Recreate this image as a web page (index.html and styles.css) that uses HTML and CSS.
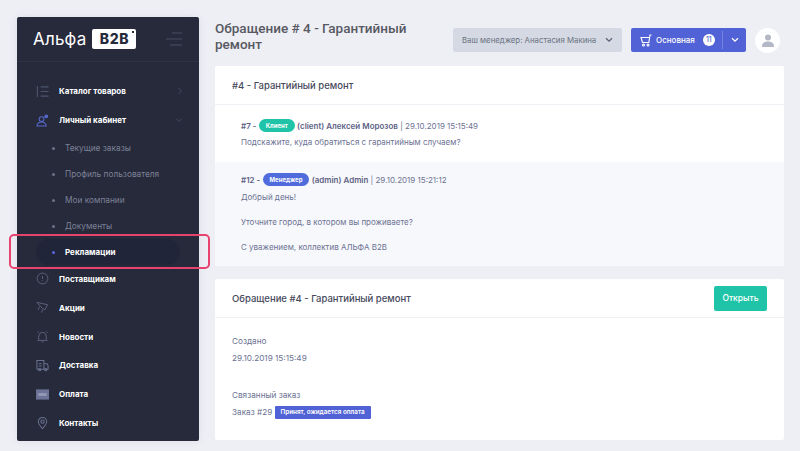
FILE: index.html
```html
<!DOCTYPE html>
<html lang="ru">
<head>
    <meta charset="UTF-8">
    <meta name="viewport" content="width=device-width, initial-scale=1.0">
    <title>Обращение # 4 - Гарантийный ремонт</title>
    <link rel="stylesheet" href="styles.css">
</head>
<body>
    <div class="page">
        <aside class="sidebar">
            <div class="brand">
                <span class="brand-name">Альфа</span>
                <span class="brand-box">B2B</span>
                <svg class="brand-toggle" width="18" height="14" viewBox="0 0 18 14" fill="none" stroke="#3d4356" stroke-width="1.4">
                    <path d="M7 1h10M1 7h16M5 13h12"/>
                </svg>
            </div>
            <nav class="menu">
                <a class="menu-item" href="#">
                    <svg class="menu-icon" viewBox="0 0 14 14" fill="none" stroke="#4d5470" stroke-width="1.2"><path d="M1.500 1v12M5 2h8.500M5 7h8.500M5 12h8.500"/></svg>
                    <span>Каталог товаров</span>
                    <svg class="menu-arrow" width="6" height="8" viewBox="0 0 6 8" fill="none" stroke="#434a60" stroke-width="1"><path d="M1.500 1l3 3-3 3"/></svg>
                </a>
                <a class="menu-item" href="#">
                    <svg class="menu-icon" viewBox="0 0 14 14" fill="none" stroke="#5869cf" stroke-width="1.100"><circle cx="6" cy="5.500" r="2.600"/><path d="M1 13c.3-3 2.300-4.500 5-4.500s4.700 1.500 5 4.500z"/><circle cx="11" cy="2.500" r="1.500" fill="#5869cf"/></svg>
                    <span>Личный кабинет</span>
                    <svg class="menu-arrow" width="8" height="6" viewBox="0 0 8 6" fill="none" stroke="#434a60" stroke-width="1"><path d="M1 1.500l3 3 3-3"/></svg>
                </a>
                <a class="submenu-item" href="#">Текущие заказы</a>
                <a class="submenu-item" href="#">Профиль пользователя</a>
                <a class="submenu-item" href="#">Мои компании</a>
                <a class="submenu-item" href="#">Документы</a>
                <a class="submenu-item active" href="#">Рекламации</a>
                <a class="menu-item" href="#">
                    <svg class="menu-icon" viewBox="0 0 14 14" fill="none" stroke="#5f6580" stroke-width="1"><circle cx="7" cy="7" r="5.800"/><path d="M7 4.500v3M7 9v.8"/></svg>
                    <span>Поставщикам</span>
                </a>
                <a class="menu-item" href="#">
                    <svg class="menu-icon" viewBox="0 0 14 14" fill="none" stroke="#5f6580" stroke-width="1"><path d="M1 1.500l11.500 2.500-3 5.500-2.500-1.500-2-2zM4 6L2.500 9M7 9l-1 3.500M3 8.500l-1 1"/></svg>
                    <span>Акции</span>
                </a>
                <a class="menu-item" href="#">
                    <svg class="menu-icon" viewBox="0 0 14 14" fill="none" stroke="#5f6580" stroke-width="1"><path d="M3 10V6.500a4 4 0 0 1 8 0V10l1.200 1.200H1.800zM6 12.800h2M1.500 3L3 1.500M12.500 3L11 1.500"/></svg>
                    <span>Новости</span>
                </a>
                <a class="menu-item" href="#">
                    <svg class="menu-icon" viewBox="0 0 14 14" fill="none" stroke="#6a7190" stroke-width="1.100"><path d="M1 1.500h7.500v9.500H1zM8.500 5H12l1 2v4H8.500M3 5h3M3 7.500h3"/><circle cx="4" cy="11.500" r="1.200"/><circle cx="10.500" cy="11.500" r="1.200"/></svg>
                    <span>Доставка</span>
                </a>
                <a class="menu-item" href="#">
                    <svg class="menu-icon" viewBox="0 0 14 14"><rect y="1.500" width="14" height="11" fill="#6d7396"/><rect x="2.500" y="5.500" width="9" height="3" fill="#9499b8"/></svg>
                    <span>Оплата</span>
                </a>
                <a class="menu-item" href="#">
                    <svg class="menu-icon" viewBox="0 0 14 14" fill="none" stroke="#6a7190" stroke-width="1.100"><path d="M7 13.500C4 10.500 2.500 8.500 2.500 6a4.500 4.500 0 0 1 9 0c0 2.500-1.500 4.500-4.500 7.500z"/><circle cx="7" cy="6" r="1.800"/></svg>
                    <span>Контакты</span>
                </a>
            </nav>
        </aside>

        <main class="content">
            <header class="topbar">
                <h1>Обращение # 4 - Гарантийный ремонт</h1>
                <div class="manager">
                    <span>Ваш менеджер: Анастасия Макина</span>
                    <svg width="8" height="6" viewBox="0 0 8 6" fill="none" stroke="#5d6478" stroke-width="1.300"><path d="M1 1.200l3 3 3-3"/></svg>
                </div>
                <div class="cart">
                    <div class="cart-main">
                        <svg width="12" height="13" viewBox="0 0 12 13" fill="none" stroke="#fff" stroke-width="1.100"><path d="M11.500 1h-1.500l-1.200 7.500H2.500L1 3.500h8.500"/><circle cx="3.500" cy="11" r="1"/><circle cx="8" cy="11" r="1"/></svg>
                        <span>Основная</span>
                        <span class="cart-count">11</span>
                    </div>
                    <div class="cart-arrow">
                        <svg width="8" height="6" viewBox="0 0 8 6" fill="none" stroke="#fff" stroke-width="1.300"><path d="M1 1.200l3 3 3-3"/></svg>
                    </div>
                </div>
                <div class="avatar">
                    <svg width="12" height="13" viewBox="0 0 12 13" fill="#b3b7c6"><circle cx="6" cy="3.500" r="3"/><path d="M0 12c0-3 2.500-4.500 6-4.500s6 1.500 6 4.500c0 .7-.5 1-1 1H1c-.5 0-1-.3-1-1z"/></svg>
                </div>
            </header>

            <section class="card">
                <div class="card-head">
                    <h2>#4 - Гарантийный ремонт</h2>
                </div>
                <div class="message">
                    <p class="message-meta"><b>#7 -</b> <span class="role role-client">Клиент</span> <b>(client) Алексей Морозов</b> | 29.10.2019 15:15:49</p>
                    <p>Подскажите, куда обратиться с гарантийным случаем?</p>
                </div>
                <div class="message message-alt">
                    <p class="message-meta"><b>#12 -</b> <span class="role role-manager">Менеджер</span> <b>(admin) Admin</b> | 29.10.2019 15:21:12</p>
                    <p>Добрый день!</p>
                    <p class="message-gap">Уточните город, в котором вы проживаете?</p>
                    <p class="message-gap">С уважением, коллектив АЛЬФА B2B</p>
                </div>
            </section>

            <section class="card">
                <div class="card-head card-head-action">
                    <h2>Обращение #4 - Гарантийный ремонт</h2>
                    <button class="btn-open" type="button">Открыть</button>
                </div>
                <div class="details">
                    <p>Создано</p>
                    <p class="details-value">29.10.2019 15:15:49</p>
                    <p class="details-label">Связанный заказ</p>
                    <p class="details-value">Заказ #29 <span class="status">Принят, ожидается оплата</span></p>
                </div>
            </section>
        </main>
    </div>

    <div class="highlight"></div>
</body>
</html>
```

FILE: styles.css
```css
html, body {
    height: 100%;
}

body {
    font-family: 'Inter', 'Liberation Sans', sans-serif;
    background-color: #eeeef5;
    color: #6c7293;
    margin: 0;
    padding: 0;
    overflow: hidden;
    position: relative;
}

p, h1, h2 {
    margin: 0;
}

a {
    text-decoration: none;
}

.page {
    display: flex;
    gap: 16px;
    padding: 14px 16px 0 17px;
}

.sidebar {
    width: 182px;
    height: 424px;
    margin-top: 3px;
    flex-shrink: 0;
    background-color: #262a3b;
    border-radius: 2px;
    overflow: hidden;
    box-shadow: 0 0 8px rgba(60, 60, 90, 0.08);
}

.brand {
    height: 45px;
    display: flex;
    align-items: center;
    padding: 0 16px;
    border-bottom: 1px solid #2e3345;
    box-sizing: border-box;
}

.brand-name {
    font-size: 17px;
    color: #ffffff;
    letter-spacing: 0.2px;
}

.brand-box {
    margin-left: 6px;
    width: 44px;
    height: 20px;
    background-color: #ffffff;
    border-radius: 2px;
    color: #262a3b;
    font-size: 14px;
    font-weight: 800;
    text-align: center;
    line-height: 20px;
    letter-spacing: 0.6px;
    position: relative;
}

.brand-box::after {
    content: "";
    position: absolute;
    right: 2px;
    top: 2px;
    width: 2px;
    height: 2px;
    background-color: #262a3b;
}

.brand-toggle {
    margin-left: auto;
}

.menu {
    padding-top: 15px;
}

.menu-item {
    height: 28.800px;
    display: flex;
    align-items: center;
    padding: 0 16px 0 19px;
    color: #ffffff;
    font-size: 8px;
    font-weight: 700;
}

.menu-icon {
    width: 13px;
    height: 13px;
    margin-right: 10px;
    flex-shrink: 0;
}

.menu-arrow {
    margin-left: auto;
}

.submenu-item {
    height: 26px;
    display: flex;
    align-items: center;
    margin-right: 19px;
    padding-left: 48px;
    position: relative;
    color: #7d8196;
    font-size: 8.300px;
}

.submenu-item::before {
    content: "";
    position: absolute;
    left: 35px;
    top: 12px;
    width: 3px;
    height: 3px;
    border-radius: 50%;
    background-color: #6c7084;
}

.submenu-item.active {
    color: #ffffff;
    font-weight: 700;
    font-size: 8px;
    background-color: #21253a;
    border-radius: 13px;
    margin-left: 19px;
    padding-left: 29px;
}

.submenu-item.active::before {
    left: 16px;
    background-color: #5867dd;
}

.content {
    flex: 1;
    min-width: 0;
}

.topbar {
    height: 52px;
    display: flex;
    align-items: center;
}

.topbar h1 {
    width: 200px;
    margin-right: auto;
    margin-top: -9px;
    font-family: 'Roboto', 'Liberation Sans', sans-serif;
    font-size: 13.500px;
    font-weight: 500;
    line-height: 16px;
    color: #575962;
}

.manager {
    width: 169px;
    height: 24px;
    box-sizing: border-box;
    display: flex;
    align-items: center;
    justify-content: space-between;
    padding: 0 9px;
    background-color: #d4d9e4;
    border-radius: 2px;
    color: #6b7280;
    font-size: 7.800px;
    white-space: nowrap;
}

.cart {
    width: 115px;
    height: 24px;
    margin-left: 9px;
    display: flex;
    background-color: #5062d6;
    border-radius: 2px;
    color: #ffffff;
    font-size: 8px;
    font-weight: 500;
}

.cart-main {
    flex: 1;
    display: flex;
    align-items: center;
    gap: 4px;
    padding-left: 9px;
}

.cart-count {
    width: 12px;
    height: 12px;
    margin-left: 4px;
    border-radius: 50%;
    background-color: #ffffff;
    color: #5062d6;
    font-size: 7px;
    line-height: 12px;
    text-align: center;
}

.cart-arrow {
    width: 23px;
    display: flex;
    align-items: center;
    justify-content: center;
    border-left: 1px solid #7383e0;
    margin: 3px 0;
}

.avatar {
    width: 25px;
    height: 25px;
    margin-left: 9px;
    margin-right: 4px;
    border-radius: 50%;
    background-color: #ffffff;
    display: flex;
    align-items: center;
    justify-content: center;
}

.card {
    background-color: #ffffff;
    border-radius: 2px;
    margin-bottom: 13px;
}

.card-head {
    height: 39px;
    display: flex;
    align-items: center;
    padding: 0 17px;
    border-bottom: 1px solid #f0f0f6;
    box-sizing: border-box;
}

.card-head h2 {
    font-size: 9.500px;
    font-weight: 500;
    color: #474a5c;
}

.card-head-action {
    justify-content: space-between;
}

.btn-open {
    width: 53px;
    height: 25px;
    border: 0;
    border-radius: 2px;
    background-color: #1fc4a8;
    color: #ffffff;
    font-family: inherit;
    font-size: 8.500px;
    font-weight: 500;
}

.message {
    height: 57px;
    box-sizing: border-box;
    padding: 14px 26px 0;
    font-size: 8px;
    line-height: 14px;
}

.message p + p {
    margin-top: 2px;
}

.message .message-gap {
    margin-top: 11px;
}

.message-alt {
    height: 104px;
    background-color: #f7f8fb;
    padding-top: 11px;
}

.message-alt .message-meta + p {
    margin-top: 3px;
}

.message-meta b {
    font-weight: 600;
    color: #5d6285;
}

.role {
    display: inline-block;
    height: 13px;
    line-height: 13px;
    padding: 0 7px;
    border-radius: 7px;
    color: #ffffff;
    font-size: 6px;
    font-weight: 700;
    vertical-align: 1px;
}

.role-client {
    background-color: #1fc4a8;
}

.role-manager {
    background-color: #4f6bdc;
}

.details {
    height: 122px;
    box-sizing: border-box;
    padding: 16px 17px 0;
    font-size: 8.200px;
    line-height: 14px;
}

.details-value {
    margin-top: 3px;
}

.details-label {
    margin-top: 23px;
}

.status {
    display: inline-block;
    height: 13px;
    line-height: 13px;
    padding: 0 6px;
    background-color: #5062d6;
    border-radius: 1px;
    color: #ffffff;
    font-size: 6.300px;
    font-weight: 600;
    vertical-align: 1px;
}

/* розовая рамка поверх меню */
.highlight {
    position: absolute;
    left: 9px;
    top: 234px;
    width: 197px;
    height: 31px;
    border: 2px solid #e8426e;
    border-radius: 5px;
}
```
